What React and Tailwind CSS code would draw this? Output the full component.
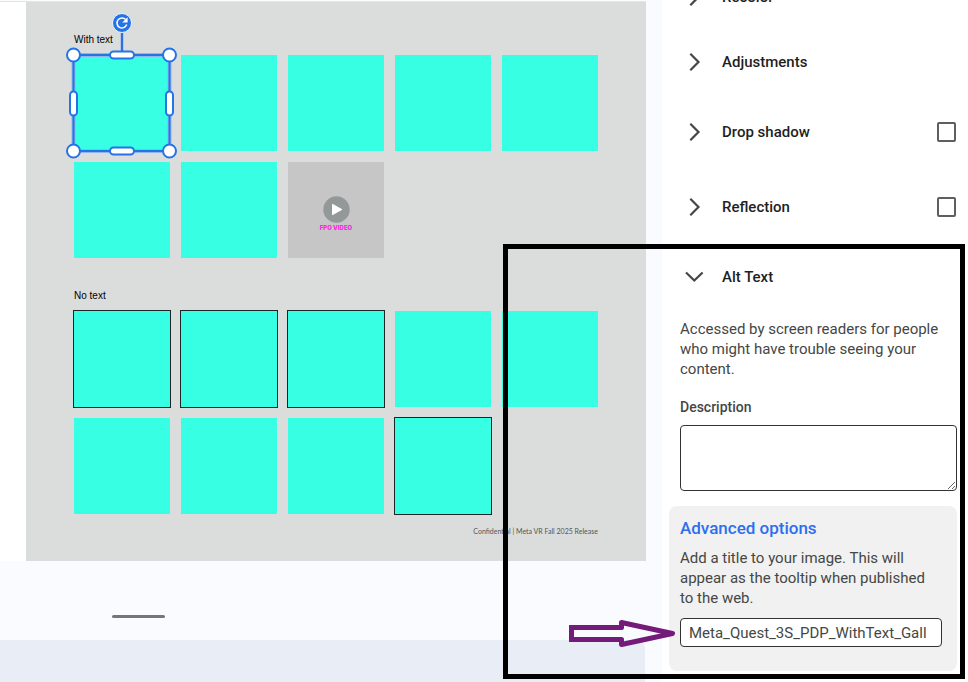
import { useState } from "react";

const withText = ["plain", "plain", "plain", "plain", "plain", "plain", "plain", "video"];
const noText = ["outlined", "outlined", "outlined", "plain", "plain", "plain", "plain", "plain", "outlined"];

const VideoTile = () => (
    <div className="flex aspect-square flex-col items-center justify-center bg-[#c6c6c6] pt-2">
        <svg viewBox="0 0 27 27" className="h-[27px] w-[27px]">
            <circle cx="13.5" cy="13.5" r="13.2" fill="#939899" />
            <path d="M9 8.4v10.2q0 .9.8.5l9-5.1q.7-.5 0-1L9.8 7.9q-.8-.4-.8.5z" fill="#fff" />
        </svg>
        <span className="font-[Inter,sans-serif] text-[6px] leading-[9px] font-black text-[#ff2fe0]">
            FPO VIDEO
        </span>
    </div>
);

// Blue bounding box with resize grips and the rotate knob
const Selection = () => (
    <svg
        viewBox="0 0 120 150"
        className="pointer-events-none absolute -top-[44px] -left-[12px] h-[150px] w-[120px]"
        fill="none"
    >
        <rect x="11.5" y="44" width="96" height="96" stroke="#8fb5ea" strokeWidth="4" />
        <path d="M60 20v22" stroke="#8fb5ea" strokeWidth="3" />
        <rect x="11.5" y="44" width="96" height="96" stroke="#2673e6" strokeWidth="2" />
        <path d="M60 20v22" stroke="#2673e6" strokeWidth="2" />
        <g fill="#fff" stroke="#2673e6" strokeWidth="2">
            <circle cx="11.5" cy="44" r="6.5" />
            <circle cx="107.5" cy="44" r="6.5" />
            <circle cx="11.5" cy="140" r="6.5" />
            <circle cx="107.5" cy="140" r="6.5" />
            <rect x="48" y="40.5" width="24" height="7" rx="3.5" />
            <rect x="48" y="136.5" width="24" height="7" rx="3.5" />
            <rect x="8" y="80.5" width="7" height="24" rx="3.5" />
            <rect x="104" y="80.5" width="7" height="24" rx="3.5" />
        </g>
        <circle cx="60" cy="12" r="9.5" fill="#2673e6" stroke="#eef3fb" strokeWidth="1" />
        <path d="M63.6 8.5a5 5 0 1 0 1.1 5.1" stroke="#fff" strokeWidth="1.5" />
        <path d="M65.6 6.2v5.4h-5.4z" fill="#fff" />
    </svg>
);

const TileGrid = ({ tiles, selected }) => (
    <div className="grid grid-cols-[repeat(5,96px)] gap-[11px]">
        {tiles.map((kind, index) =>
            kind === "video" ? (
                <VideoTile key={index} />
            ) : (
                <div
                    key={index}
                    className={`relative aspect-square bg-[#36ffe4] ${
                        kind === "outlined" ? "outline-1 outline-[#1c2625]" : ""
                    }`}
                >
                    {selected === index && <Selection />}
                </div>
            )
        )}
    </div>
);

const SectionRow = ({ title, open, checkbox }) => (
    <div className={`flex items-center pr-3 pl-5 ${checkbox ? "h-[75px]" : "h-[65px]"}`}>
        <button className="flex flex-1 items-center gap-4 text-left text-[15px] leading-5 font-medium text-[#1f1f1f]">
            <svg viewBox="0 0 24 24" className="h-6 w-6" fill="none" stroke="#444746" strokeWidth="2.2">
                {open ? <path d="M4 7.500l8.300 8L20.600 7.500" /> : <path d="M8.300 3.700l8.200 8.300-8.200 8.300" />}
            </svg>
            {title}
        </button>
        {checkbox && (
            <input
                type="checkbox"
                aria-label={title}
                className="h-5 w-[19px] appearance-none rounded-xs border-2 border-[#5f5f5f] bg-white checked:bg-[#5f5f5f]"
            />
        )}
    </div>
);

const FormatPanel = () => {
    const [description, setDescription] = useState("");
    const [title, setTitle] = useState("Meta_Quest_3S_PDP_WithText_Gall");

    return (
        <aside className="h-screen w-[306px] shrink-0 overflow-hidden bg-white text-[#444746]">
            {/* Panel is scrolled part way down */}
            <div className="-mt-9">
                <SectionRow title="Recolor" />
                <SectionRow title="Adjustments" />
                <SectionRow title="Drop shadow" checkbox />
                <SectionRow title="Reflection" checkbox />
                <SectionRow title="Alt Text" open />
            </div>

            <div className="pt-[10px] pr-[11px] pl-[18px]">
                <p className="text-[15px] leading-5">
                    Accessed by screen readers for people who might have trouble seeing your content.
                </p>
                <label htmlFor="description" className="mt-[18px] block text-sm leading-5 font-medium">
                    Description
                </label>
                <textarea
                    id="description"
                    value={description}
                    onChange={(e) => setDescription(e.target.value)}
                    className="mt-2 block h-[66px] w-full rounded-sm border border-[#333] bg-white p-2 text-[15px]"
                />
            </div>

            <div className="mt-[15px] mr-[11px] ml-[7px] rounded-lg bg-[#f1f1f1] pt-3 pr-[15px] pb-6 pl-[11px]">
                <button className="block text-[17px] leading-5 font-medium text-[#2b6ff0]">Advanced options</button>
                <p className="mt-[10px] pr-2 text-[15px] leading-5">
                    Add a title to your image. This will appear as the tooltip when published to the web.
                </p>
                <input
                    type="text"
                    aria-label="Title"
                    value={title}
                    onChange={(e) => setTitle(e.target.value)}
                    className="mt-[10px] block h-[29px] w-full rounded-sm border border-[#333] bg-white px-2 text-[15px]"
                />
            </div>
        </aside>
    );
};

const App = () => {
    return (
        <div className="relative flex h-screen overflow-hidden bg-[#f9fbff] font-[Roboto,sans-serif]">
            <main className="flex min-w-0 flex-1 flex-col pt-px">
                {/* Slide */}
                <div className="mr-4 border-t border-[#e3e6ea] bg-white pl-[26px]">
                    <div className="bg-[#dbdddc] px-12 pt-8 pb-[25px] font-['Liberation_Sans',sans-serif] text-black">
                        <p className="mb-[9px] text-[10px] leading-3">With text</p>
                        <TileGrid tiles={withText} selected={0} />
                        <p className="mt-8 mb-[9px] text-[10px] leading-3">No text</p>
                        <TileGrid tiles={noText} />
                        <p className="mt-3 text-right font-[Lato,sans-serif] text-[7px] leading-[10px] text-[#555]">
                            Confidential | Meta VR Fall 2025 Release
                        </p>
                    </div>
                </div>

                {/* Speaker notes */}
                <div className="flex-1 pt-[54px] pl-28">
                    <div className="h-[3px] w-[53px] rounded-full bg-[#747775]" />
                </div>
                <div className="mr-[17px] h-[42px] rounded-tr-lg bg-[#e8edf6]" />
            </main>

            <FormatPanel />

            {/* Callout */}
            <div className="pointer-events-none absolute right-[3px] bottom-[3px] h-[435px] w-[462px] border-5 border-black" />
            <svg
                viewBox="0 0 108 30"
                className="pointer-events-none absolute right-[291px] bottom-[33px] h-[30px] w-[108px]"
                fill="none"
            >
                <path
                    d="M2.5 8.5H52.5V3.5L103.5 14.5 52.5 25.500V20.500H2.5z"
                    stroke="#731a7a"
                    strokeWidth="5"
                    strokeLinejoin="round"
                />
                <path d="M0 6h5v17H0z" fill="#731a7a" />
            </svg>
        </div>
    );
};

export default App;
